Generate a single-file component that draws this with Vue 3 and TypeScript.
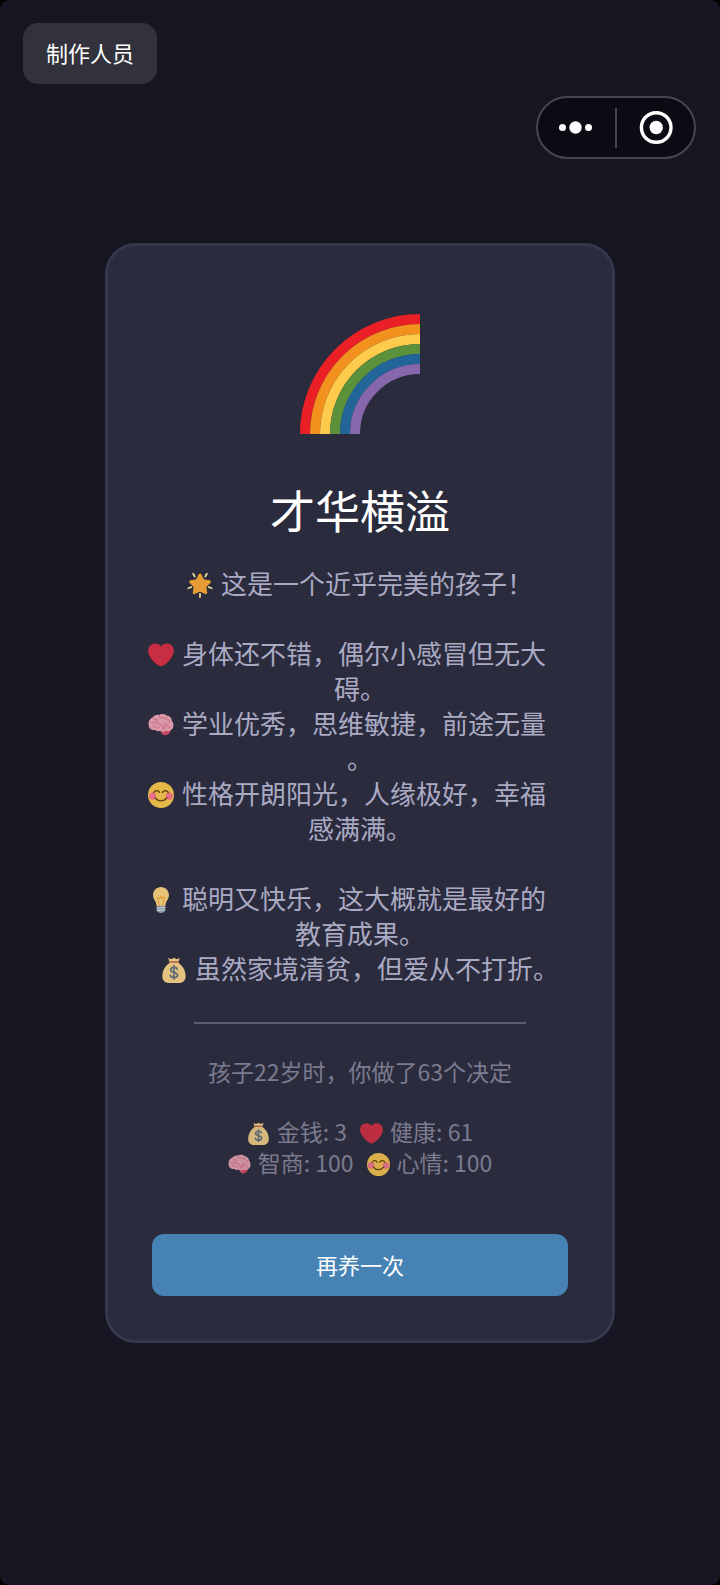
<script setup lang="ts">
type IconName = 'star' | 'heart' | 'brain' | 'smile' | 'bulb' | 'bag'

interface Verdict {
  icon: IconName
  rows: string[]
  spaced?: boolean
}

interface Stat {
  icon: IconName
  label: string
  value: number
}

const verdicts: Verdict[] = [
  { icon: 'star', rows: ['这是一个近乎完美的孩子！'], spaced: true },
  { icon: 'heart', rows: ['身体还不错，偶尔小感冒但无大', '碍。'] },
  { icon: 'brain', rows: ['学业优秀，思维敏捷，前途无量', '。'] },
  { icon: 'smile', rows: ['性格开朗阳光，人缘极好，幸福', '感满满。'], spaced: true },
  { icon: 'bulb', rows: ['聪明又快乐，这大概就是最好的', '教育成果。'] },
  { icon: 'bag', rows: ['虽然家境清贫，但爱从不打折。'] },
]

const stats: Stat[][] = [
  [
    { icon: 'bag', label: '金钱', value: 3 },
    { icon: 'heart', label: '健康', value: 61 },
  ],
  [
    { icon: 'brain', label: '智商', value: 100 },
    { icon: 'smile', label: '心情', value: 100 },
  ],
]

const bands = [
  { r: 115, color: '#eb2027' },
  { r: 105, color: '#f3911f' },
  { r: 95, color: '#fecb4c' },
  { r: 85, color: '#5c913b' },
  { r: 75, color: '#226699' },
  { r: 65, color: '#8767ac' },
]
</script>

<template>
  <svg class="sprite" aria-hidden="true">
    <symbol id="star" viewBox="0 0 36 36">
      <g stroke="#ffe8a8" stroke-width="2.6" stroke-linecap="round">
        <path d="M8.5 2.5l2.200 3.600M27.500 2.500l-2.200 3.600M1.800 22.500l4-1.600M34.200 22.500l-4-1.600M18 30.500v4" />
      </g>
      <path fill="#ffac33" stroke="#ffac33" stroke-width="4" stroke-linejoin="round" d="M18 4l4.100 8 8.900 1.500-6.200 6.400 1.200 8.900L18 25l-8 3.800 1.200-8.900L5 13.500l8.900-1.500z" />
    </symbol>
    <symbol id="heart" viewBox="0 0 36 36">
      <path fill="#dd2e44" d="M35.885 11.833c0-5.45-4.418-9.868-9.867-9.868-3.308 0-6.227 1.633-8.018 4.129-1.791-2.496-4.71-4.129-8.017-4.129-5.45 0-9.868 4.417-9.868 9.868 0 .772.098 1.52.266 2.241C1.751 22.587 11.216 31.568 18 34.034c6.783-2.466 16.249-11.447 17.617-19.959.17-.721.268-1.469.268-2.242z" />
    </symbol>
    <symbol id="brain" viewBox="0 0 36 36">
      <path fill="#dd4b6a" d="M17 26c2-2 12-4 14-2 1 3-2 8-6 8-4 1-7-2-8-6z" />
      <path fill="#f4abba" d="M1 18C0 13 3 9 6 8c2-3 6-5 9-4 4-2 9-1 11 1 4 0 7 4 7 7 3 3 3 10 0 12-2 3-6 3-8 2-2 2-6 2-8 0-2 1-5 1-7-1-4 1-9-2-9-7z" />
      <g fill="none" stroke="#dc6b83" stroke-width="1.3" stroke-linecap="round">
        <path d="M4 15c2-1 4 0 4 2M8 9c1 2 3 2 5 1v4M16 5c-1 3 1 4 3 3s4-1 4 2M26 7c-2 2 0 4 2 4s3 2 2 4M13 17c2-2 5-1 5 1s2 3 4 2 2-4 0-5M6 21c1-2 4-2 5 0s4 2 5 0M26 16v4c-2 0-3 2-3 4M29 19c1 1 1 3-1 4M19 24c0-2 2-2 3-2M8 13c2 0 3 1 3 3" />
      </g>
    </symbol>
    <symbol id="smile" viewBox="0 0 36 36">
      <circle cx="18" cy="18" r="18" fill="#ffcc4d" />
      <circle cx="6.500" cy="19.500" r="5" fill="#ff7892" />
      <circle cx="29.500" cy="19.500" r="5" fill="#ff7892" />
      <g fill="none" stroke="#664500" stroke-width="1.9" stroke-linecap="round">
        <path d="M8 14.500c2-3.400 6-3.400 8 0M20 14.500c2-3.400 6-3.400 8 0M10 22c4 5.400 12 5.400 16 0" />
      </g>
    </symbol>
    <symbol id="bulb" viewBox="0 0 36 36">
      <path fill="#ffd983" d="M29 11.1C29 5 24 0 18 0S7 5 7 11.1c0 6.500 5 8.900 5 15.900h12c0-7 5-9.400 5-15.900z" />
      <path fill="none" stroke="#ffac33" stroke-width="1.500" stroke-linejoin="round" d="M16 27l-3-13 3 2 2-3 2 3 3-2-3 13" />
      <path fill="#99aab5" d="M12 26h12v6c0 2-3 4-6 4s-6-2-6-4z" />
      <path fill="none" stroke="#dce6ec" stroke-width="1.500" d="M12 29.500l12-1M12 32.500l12-1" />
    </symbol>
    <symbol id="bag" viewBox="0 0 36 36">
      <path fill="#fdd888" d="M10 1l4 2 4-2 4 2 4-2-2 7c6 4 10 11 10 17 1 7-3 10-7 11H9c-4-1-8-4-7-11 0-6 4-13 10-17z" />
      <path fill="#bf6952" d="M12 6h12c1 0 1 2 0 2H12c-1 0-1-2 0-2z" />
      <path fill="none" stroke="#67757f" stroke-width="2.400" stroke-linecap="round" d="M22.500 17c-1-3.500-9-3.500-9 1s9.500 2.500 9.500 7-9 4.500-10 .5M18 12v18.500" />
    </symbol>
  </svg>

  <main class="screen">
    <header class="top">
      <button class="credits" type="button">制作人员</button>
      <div class="capsule">
        <button class="capsule-btn" type="button" aria-label="更多">
          <svg width="34" height="34" viewBox="0 0 34 34" fill="#fff">
            <circle cx="2.500" cy="16.500" r="3.500" />
            <circle cx="15.500" cy="16.500" r="6.200" />
            <circle cx="28.500" cy="16.500" r="3.500" />
          </svg>
        </button>
        <span class="capsule-line"></span>
        <button class="capsule-btn" type="button" aria-label="关闭">
          <svg width="34" height="34" viewBox="0 0 34 34">
            <circle cx="17.200" cy="16.500" r="14.800" fill="none" stroke="#fff" stroke-width="3.400" />
            <circle cx="17.200" cy="16.500" r="6.700" fill="#fff" />
          </svg>
        </button>
      </div>
    </header>

    <section class="card">
      <svg class="rainbow" viewBox="0 0 120 120" aria-hidden="true">
        <circle
          v-for="band in bands"
          :key="band.r"
          cx="120"
          cy="120"
          :r="band.r"
          fill="none"
          :stroke="band.color"
          stroke-width="10"
        />
      </svg>
      <h1 class="title">才华横溢</h1>

      <div class="verdicts">
        <p v-for="v in verdicts" :key="v.icon" class="verdict" :class="{ spaced: v.spaced }">
          <span
            v-for="(row, i) in v.rows"
            :key="row"
            class="row"
            :class="{ wrapped: i < v.rows.length - 1 }"
          ><svg v-if="i === 0" class="emoji"><use :href="'#' + v.icon" /></svg>{{ row }}</span>
        </p>
      </div>

      <hr class="divider" />

      <p class="summary">孩子22岁时，你做了63个决定</p>
      <div class="stats">
        <div v-for="(line, i) in stats" :key="i" class="stat-line">
          <span v-for="s in line" :key="s.label" class="stat">
            <svg class="emoji"><use :href="'#' + s.icon" /></svg>{{ s.label }}: {{ s.value }}
          </span>
        </div>
      </div>

      <button class="again" type="button">再养一次</button>
    </section>
  </main>
</template>

<style>
body {
  margin: 0;
  background: #000;
}
</style>

<style scoped>
.sprite {
  display: none;
}
.screen {
  box-sizing: border-box;
  min-height: 100vh;
  padding: 23px 24px 60px 23px;
  border-radius: 9px;
  background: #161622;
  color: #fff;
  font-family: "Noto Sans CJK SC", "Noto Sans", sans-serif;
  font-weight: 400;
}
.top {
  display: flex;
  flex-direction: column;
  align-items: flex-start;
  gap: 12px;
}
button {
  border: 0;
  color: #fff;
  font: inherit;
  font-size: 22px;
  line-height: 31px;
  cursor: pointer;
}
.credits {
  padding: 14px 23px 16px;
  border-radius: 15px;
  background: #32323d;
}
.capsule {
  display: flex;
  align-items: center;
  align-self: flex-end;
  box-sizing: border-box;
  width: 160px;
  height: 63px;
  border: 2px solid #46464f;
  border-radius: 32px;
  background: #0b0b13;
}
.capsule-btn {
  display: flex;
  flex: 1;
  justify-content: center;
  padding: 0;
  background: none;
}
.capsule-btn svg {
  overflow: visible;
}
.capsule-line {
  width: 2px;
  height: 40px;
  background: #46464f;
}
.card {
  display: flex;
  flex-direction: column;
  align-items: center;
  margin: 84px 81px 0 82px;
  padding: 68px 44px 44px;
  border: 3px solid #36364c;
  border-radius: 31px;
  background: #2b2b3e;
}
.rainbow {
  width: 120px;
  height: 120px;
  overflow: hidden;
}
.title {
  margin: 46px 0 25px;
  font-size: 45px;
  font-weight: inherit;
  line-height: 60px;
}
.verdicts {
  color: #aaaac3;
  font-size: 26px;
  line-height: 35px;
}
.verdict {
  margin: 0;
  text-align: center;
}
.spaced {
  margin-bottom: 35px;
}
.row {
  display: block;
  white-space: nowrap;
}
.wrapped {
  padding-right: 26px;
}
.emoji {
  width: 1em;
  height: 1em;
  margin-right: 8px;
  vertical-align: -4px;
  opacity: 0.88;
}
.divider {
  width: 80%;
  height: 2px;
  margin: 37px 0 32px;
  border: 0;
  background: #5a5a70;
}
.summary,
.stats {
  margin: 0;
  color: #7b7b90;
  font-size: 23px;
  line-height: 31px;
}
.stats {
  margin-top: 29px;
}
.stat-line {
  display: flex;
  justify-content: center;
  gap: 13px;
}
.stat {
  white-space: nowrap;
}
.stat .emoji {
  margin-right: 7px;
  opacity: 0.82;
}
.again {
  width: 100%;
  margin-top: 56px;
  padding: 15px 0 16px;
  border-radius: 12px;
  background: #4682b4;
}
</style>
